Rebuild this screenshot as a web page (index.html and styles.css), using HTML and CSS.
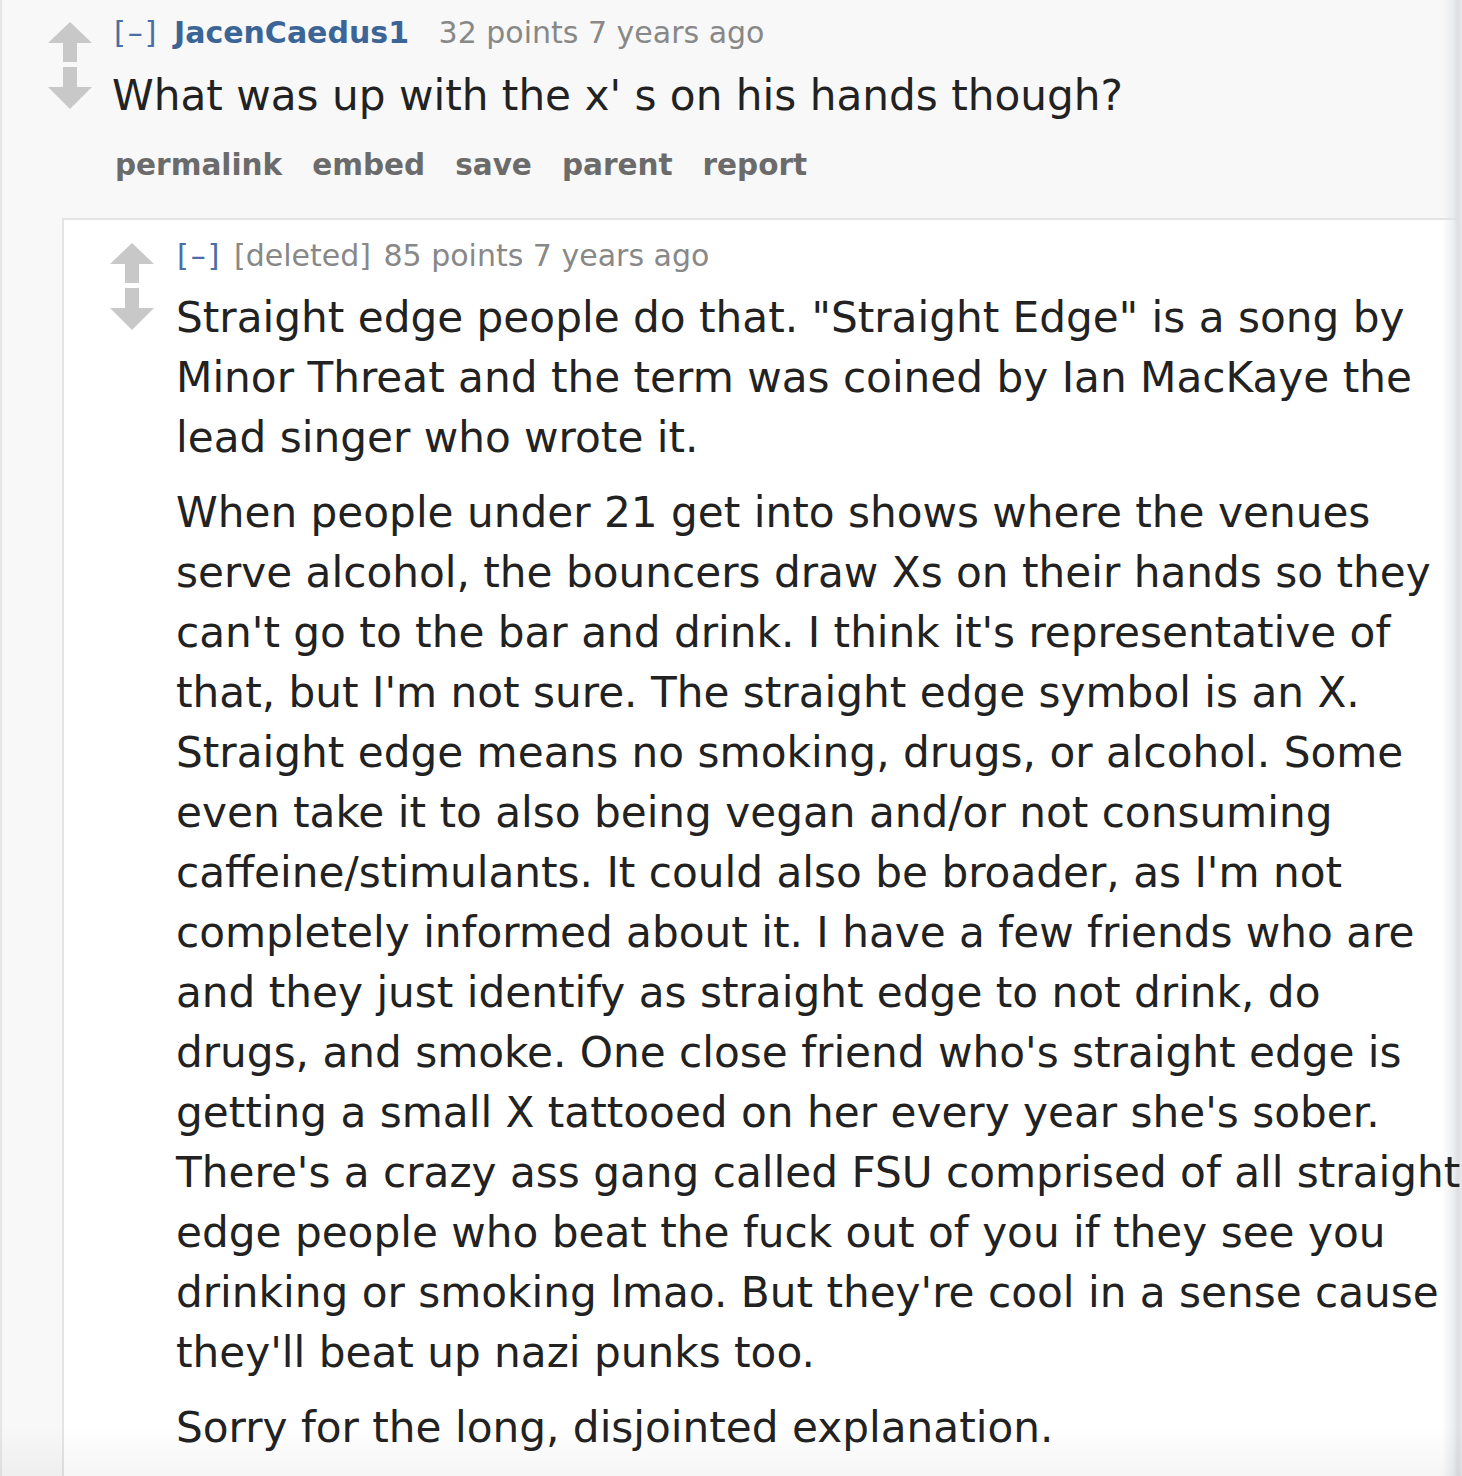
FILE: index.html
```html
<!DOCTYPE html>
<html>
<head>
<meta charset="utf-8">
<link rel="stylesheet" href="styles.css">
</head>
<body>
<div class="comment outer">
  <div class="row">
    <div class="midcol">
      <svg class="arrows" viewBox="0 0 44 88" width="44" height="88"><path d="M22 0 L44 21 L29 21 L29 40 L15 40 L15 21 L0 21 Z" fill="#c8c8c8"/><path d="M15 45 L29 45 L29 65 L44 65 L22 87 L0 65 L15 65 Z" fill="#c8c8c8"/></svg>
    </div>
    <div class="entry">
      <p class="tagline"><span class="expand">[–]</span> <span class="author">JacenCaedus1</span> <span class="score">32 points 7 years ago</span></p>
      <div class="md"><p>What was up with the x' s on his hands though?</p></div>
      <ul class="buttons"><li>permalink</li><li>embed</li><li>save</li><li>parent</li><li>report</li></ul>
    </div>
  </div>
  <div class="children">
    <div class="comment child">
      <div class="row">
        <div class="midcol">
          <svg class="arrows" viewBox="0 0 44 88" width="44" height="88"><path d="M22 0 L44 21 L29 21 L29 40 L15 40 L15 21 L0 21 Z" fill="#c8c8c8"/><path d="M15 45 L29 45 L29 65 L44 65 L22 87 L0 65 L15 65 Z" fill="#c8c8c8"/></svg>
        </div>
        <div class="entry">
          <p class="tagline"><span class="expand">[–]</span> <span class="deleted">[deleted]</span> <span class="score">85 points 7 years ago</span></p>
          <div class="md">
            <p>Straight edge people do that. "Straight Edge" is a song by<br>Minor Threat and the term was coined by Ian MacKaye the<br>lead singer who wrote it.</p>
            <p>When people under 21 get into shows where the venues<br>serve alcohol, the bouncers draw Xs on their hands so they<br>can't go to the bar and drink. I think it's representative of<br>that, but I'm not sure. The straight edge symbol is an X.<br>Straight edge means no smoking, drugs, or alcohol. Some<br>even take it to also being vegan and/or not consuming<br>caffeine/stimulants. It could also be broader, as I'm not<br>completely informed about it. I have a few friends who are<br>and they just identify as straight edge to not drink, do<br>drugs, and smoke. One close friend who's straight edge is<br>getting a small X tattooed on her every year she's sober.<br>There's a crazy ass gang called FSU comprised of all straight<br>edge people who beat the fuck out of you if they see you<br>drinking or smoking lmao. But they're cool in a sense cause<br>they'll beat up nazi punks too.</p>
            <p>Sorry for the long, disjointed explanation.</p>
          </div>
        </div>
      </div>
    </div>
  </div>
</div>
<div class="shade-right"></div>
<div class="shade-bottom"></div>
</body>
</html>
```

FILE: styles.css
```css
html, body {
  margin: 0;
  padding: 0;
}
body {
  width: 1462px;
  height: 1476px;
  overflow: hidden;
  background: #f8f8f8;
  font-family: "DejaVu Sans", Verdana, sans-serif;
  color: #222;
  position: relative;
}
.outer {
  border-left: 2px solid #e6e6e6;
  background: #f8f8f8;
  padding-top: 13px;
  min-height: 1476px;
  box-sizing: border-box;
}
.row {
  display: flex;
  align-items: flex-start;
}
.children {
  margin-left: 60px;
  margin-right: 4px;
  margin-top: 33px;
}
.child {
  border-top: 2px solid #e4e4e4;
  border-left: 2px solid #e4e4e4;
  background: #fff;
  padding-top: 16px;
  height: 1400px;
}
.midcol {
  width: 44px;
  margin-left: 46px;
  flex: none;
}
.outer > .row .midcol { margin-top: 9px; }
.child .midcol { margin-top: 7px; }
.arrows { display: block; }
.entry {
  margin-left: 22px;
  flex: 1;
  min-width: 0;
}
.tagline {
  margin: 0 0 13px 0;
  font-size: 30px;
  line-height: 40px;
  color: #888;
  white-space: nowrap;
}
.child .tagline { margin-bottom: 12px; margin-left: 1px; }
.expand {
  color: #4a6ea5;
  letter-spacing: 2px;
  margin-right: 3px;
}
.author {
  color: #3a6596;
  font-weight: bold;
  margin-left: 3px;
  margin-right: 20px;
}
.deleted { color: #888; margin-right: 3px; }
.score { color: #888; }
.md {
  position: relative;
  z-index: 2;
}
.md p {
  margin: 0 0 15px 0;
  font-size: 42.2px;
  line-height: 60px;
  color: #222;
  white-space: nowrap;
}
.outer > .row .md p { margin-bottom: 0; margin-left: -2px; }
.buttons {
  list-style: none;
  margin: 19px 0 0 1px;
  padding: 0;
  display: flex;
  gap: 30px;
  font-size: 29.5px;
  line-height: 40px;
  font-weight: bold;
  color: #6b6b6b;
}
.shade-right {
  position: absolute;
  top: 0;
  right: 0;
  width: 20px;
  height: 100%;
  z-index: 1;
  background: linear-gradient(to right, rgba(220,223,226,0) 0%, rgba(220,223,226,0.5) 55%, #dcdfe2 80%, #e6e8ea 100%);
}
.shade-bottom {
  position: absolute;
  left: 0;
  bottom: 0;
  width: 100%;
  height: 50px;
  z-index: 1;
  background: linear-gradient(to bottom, rgba(0,0,0,0) 0%, rgba(0,0,0,0.04) 100%);
}
```
